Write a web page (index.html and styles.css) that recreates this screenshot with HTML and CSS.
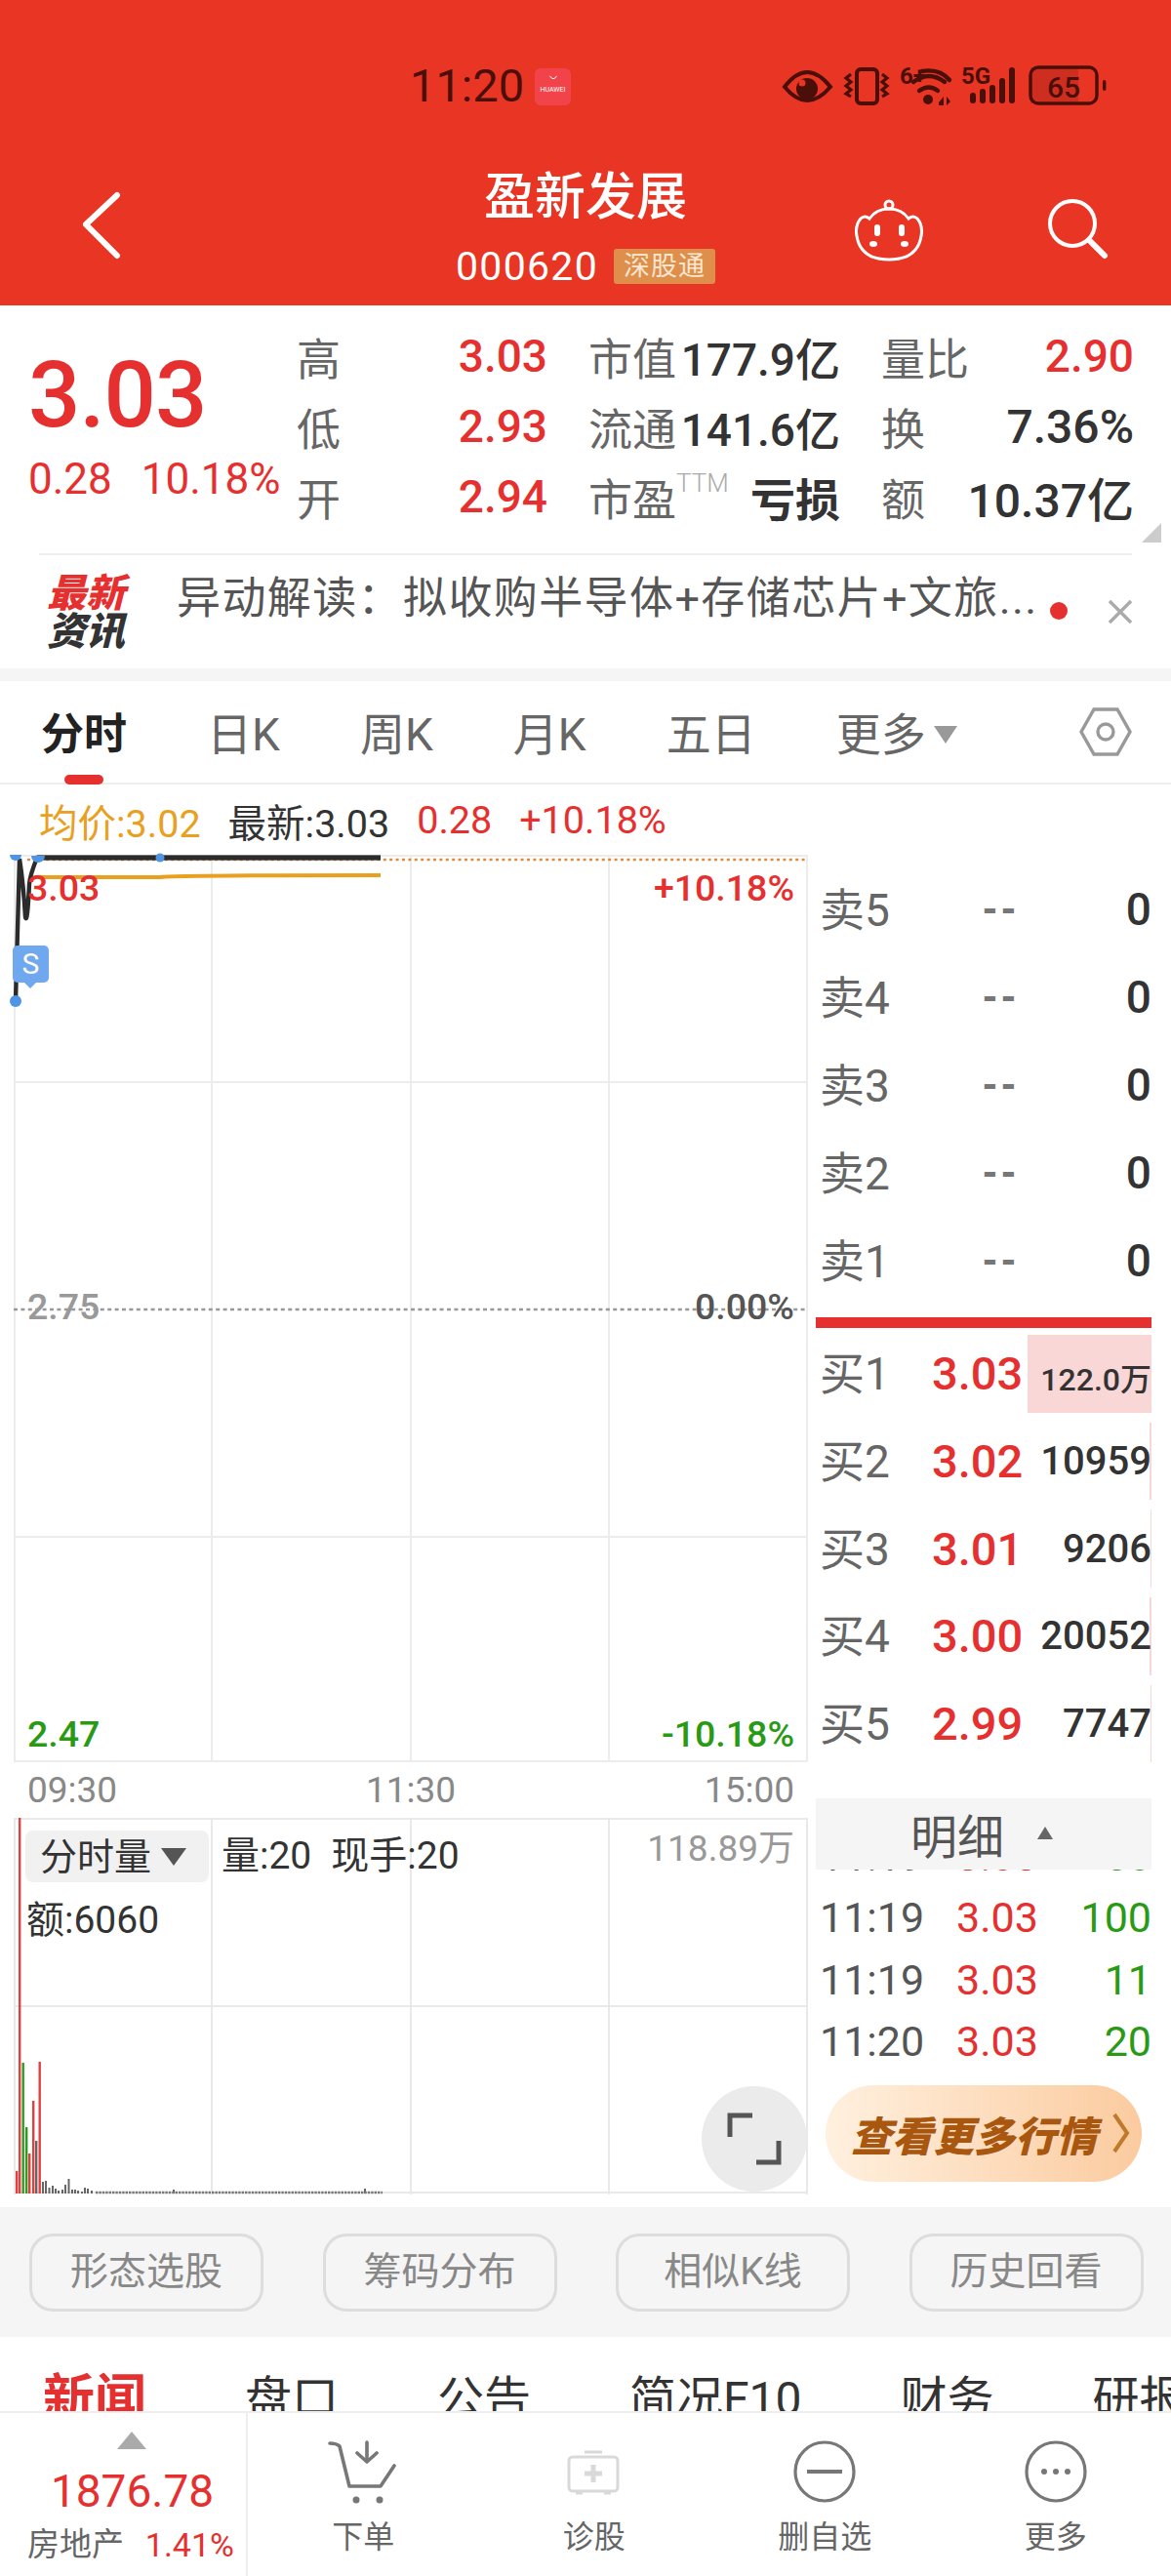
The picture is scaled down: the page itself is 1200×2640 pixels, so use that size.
FILE: index.html
```html
<!DOCTYPE html>
<html lang="zh-CN">
<head>
<meta charset="utf-8">
<title>盈新发展</title>
<link rel="stylesheet" href="styles.css">
</head>
<body>
<div class="page">
<header class="header">
  <div class="status">
    <span class="clock">11:20</span>
    <span class="hw"><svg class="hw-smile" viewBox="0 0 14 8"><path d="M2 1q5 8 10 0" fill="none" stroke="#fff" stroke-width="1.4"/></svg><span class="hw-text">HUAWEI</span></span>
    <svg class="status-icons" viewBox="0 0 350 65" width="350" height="65">
      <g fill="none" stroke="#4a0f08">
        <path d="M14 34Q37 4 61 34Q37 62 14 34Z" stroke-width="4"/>
        <rect x="88" y="16" width="21" height="35" rx="4" stroke-width="4"/>
        <path d="M82 21l-5 4 5 4-5 4 5 4-5 4 5 3M114 21l5 4-5 4 5 4-5 4 5 4-5 3" stroke-width="3.2"/>
        <path d="M155 18q18-3 28 9M146 29q16-12 32 0M152 38q10-7 19 0" stroke-width="4.4" stroke-linecap="round"/>
        <rect x="266" y="14" width="68" height="37" rx="8" stroke-width="3.4"/>
      </g>
      <path d="M266 14h49v37h-49z" fill="#4a0f08" opacity=".16"/>
      <g fill="#4a0f08">
        <circle cx="37" cy="36" r="11"/>
        <circle cx="161" cy="47" r="5"/>
        <path d="M172 50l5-6v9h-5zM180 44l4 5-4 4z"/>
        <rect x="204" y="40" width="6" height="11" rx="3"/>
        <rect x="214" y="36" width="6" height="15" rx="3"/>
        <rect x="224" y="32" width="6" height="19" rx="3"/>
        <rect x="234" y="25" width="6" height="26" rx="3"/>
        <rect x="244" y="14" width="6" height="37" rx="3"/>
        <rect x="340" y="27" width="3.4" height="11" rx="1.7"/>
        <text x="132" y="31" class="st-small">6+</text>
        <text x="195" y="31" class="st-small">5G</text>
        <text x="300" y="45" class="st-batt">65</text>
      </g>
      <circle cx="32" cy="30" r="3.5" fill="#e83524"/>
    </svg>
  </div>
  <div class="nav">
    <svg class="nav-back" viewBox="0 0 50 80" width="50" height="80"><path d="M38 6 6 36l32 32" fill="none" stroke="#fff" stroke-width="6" stroke-linecap="round" stroke-linejoin="round"/></svg>
    <div class="nav-title">
      <div class="stock-name">盈新发展</div>
      <div class="stock-code"><span>000620</span><span class="tag">深股通</span></div>
    </div>
    <svg class="nav-bot" viewBox="0 0 70 66" width="70" height="66">
      <g fill="none" stroke="#fff" stroke-width="3"><circle cx="35" cy="6" r="4"/><path d="M35 10q-13 0-20 10q-5-4-9 0q-6 7-4 18q4 24 33 24q29 0 33-24q2-11-4-18q-4-4-9 0q-7-10-20-10z"/></g>
      <g fill="#fff"><rect x="20" y="26" width="6" height="12" rx="3"/><rect x="45" y="26" width="6" height="12" rx="3"/><ellipse cx="19" cy="46" rx="4" ry="3"/><ellipse cx="51" cy="46" rx="4" ry="3"/></g>
    </svg>
    <svg class="nav-search" viewBox="0 0 64 64" width="64" height="64"><g fill="none" stroke="#fff"><circle cx="26" cy="26" r="23" stroke-width="4"/><path d="M43 43l16 16" stroke-width="6" stroke-linecap="round"/></g></svg>
  </div>
</header>

<section class="quote">
  <div class="quote-main">
    <div class="big-price">3.03</div>
    <div class="big-change"><span>0.28</span><span>10.18%</span></div>
  </div>
  <div class="quote-grid">
    <div class="cell"><span class="lbl">高</span><span class="red">3.03</span></div>
    <div class="cell"><span class="lbl">市值</span><span class="dark">177.9亿</span></div>
    <div class="cell"><span class="lbl">量比</span><span class="red">2.90</span></div>
    <div class="cell"><span class="lbl">低</span><span class="red">2.93</span></div>
    <div class="cell"><span class="lbl">流通</span><span class="dark">141.6亿</span></div>
    <div class="cell"><span class="lbl">换</span><span class="dark wide">7.36%</span></div>
    <div class="cell"><span class="lbl">开</span><span class="red">2.94</span></div>
    <div class="cell"><span class="lbl">市盈<sup class="ttm">TTM</sup></span><span class="dark strong">亏损</span></div>
    <div class="cell"><span class="lbl">额</span><span class="dark wide">10.37亿</span></div>
  </div>
  <i class="corner"></i>
</section>

<section class="news">
  <div class="news-logo"><span class="logo-a">最新</span><span class="logo-b">资讯</span></div>
  <div class="news-text">异动解读：拟收购半导体+存储芯片+文旅...</div>
  <i class="news-dot"></i>
  <svg class="news-close" viewBox="0 0 28 28" width="28" height="28"><path d="M3 3l22 22M25 3 3 25" stroke="#aaa" stroke-width="3.4" fill="none"/></svg>
</section>

<nav class="tabs">
  <span class="tab active">分时</span>
  <span class="tab">日K</span>
  <span class="tab">周K</span>
  <span class="tab">月K</span>
  <span class="tab">五日</span>
  <span class="tab">更多<i class="tab-caret"></i></span>
  <svg class="tab-hex" viewBox="0 0 56 56" width="56" height="56"><g fill="none" stroke="#999" stroke-width="3.4"><path d="M16 5h24l13 23-13 23H16L3 28z"/><circle cx="28" cy="28" r="8"/></g></svg>
</nav>

<main class="trade">
  <div class="charts">
    <div class="legend"><span class="orange">均价:3.02</span><span class="dark">最新:3.03</span><span class="red">0.28</span><span class="red">+10.18%</span></div>
    <div class="chart-main">
      <svg class="chart-svg" viewBox="0 0 814 930" width="814" height="930">
        <g stroke="#ececec" stroke-width="2" fill="none">
          <path d="M1 0V930M203 0V930M407 0V930M610 0V930M813 0V930M0 1H814M0 233H814M0 699H814M0 929H814"/>
        </g>
        <path d="M0 466H814" stroke="#999" stroke-width="2.4" stroke-dasharray="4 3.4"/>
        <path d="M14 5H814" stroke="#e08a3c" stroke-width="2.6" stroke-dasharray="3 3.4"/>
        <path d="M16 26Q20 22 30 23L150 23Q160 21 376 21" fill="none" stroke="#e8a01e" stroke-width="4"/>
        <path d="M2 150 6 4Q10 30 12 64Q14 72 16 30Q17 20 24 3H376" fill="none" stroke="#2b2b2b" stroke-width="4.4"/>
        <path d="M24 3H376" stroke="#2b2b2b" stroke-width="5"/>
        <g fill="#4f95e6"><path d="M-4 0h12a6 6 0 0 1-12 0z"/><circle cx="2" cy="150" r="6"/><path d="M18 1h14a7 7 0 0 1-14 0z"/><circle cx="150" cy="3" r="4.5"/></g>
      </svg>
      <span class="cl cl-tl red">3.03</span>
      <span class="cl cl-tr red">+10.18%</span>
      <span class="cl cl-ml grey">2.75</span>
      <span class="cl cl-mr mid">0.00%</span>
      <span class="cl cl-bl green">2.47</span>
      <span class="cl cl-br green">-10.18%</span>
      <span class="s-tag">S</span>
    </div>
    <div class="axis"><span>09:30</span><span>11:30</span><span>15:00</span></div>
    <div class="chart-vol">
      <svg class="chart-svg" viewBox="0 0 814 386" width="814" height="386">
        <path d="M1 0V386M203 0V386M407 0V386M610 0V386M813 0V386M0 1H814M0 193H814M0 384H814" stroke="#e9e9e9" stroke-width="2" fill="none"/>
        <g fill="#e1403f">
          <rect x="2" y="362" width="2.4" height="23"/><rect x="5" y="0" width="2.4" height="385"/>
          <rect x="15" y="344" width="2.4" height="41"/><rect x="19" y="290" width="2.4" height="95"/><rect x="25.5" y="250" width="2.4" height="135"/>
        </g>
        <g fill="#2f9a20"><rect x="8.500" y="251" width="2.400" height="134"/><rect x="12" y="317" width="2.400" height="68"/></g>
        <g fill="#666"><rect x="22" y="331" width="2.400" height="54"/>
          <rect x="29" y="373" width="2" height="12"/><rect x="32" y="372" width="2" height="13"/><rect x="35.500" y="379" width="2" height="6"/><rect x="39" y="377" width="2" height="8"/><rect x="42" y="380" width="2" height="5"/><rect x="45" y="382" width="2" height="3"/><rect x="49" y="381" width="2" height="4"/><rect x="52" y="376" width="2" height="9"/><rect x="55.500" y="370" width="2" height="15"/><rect x="59" y="381" width="2" height="4"/><rect x="62" y="381" width="2" height="4"/><rect x="65" y="382" width="2" height="3"/><rect x="69" y="383" width="2" height="2"/><rect x="72" y="379" width="2" height="6"/><rect x="75" y="380" width="2" height="5"/><rect x="79" y="382" width="2" height="3"/><rect x="163" y="381" width="2" height="4"/><rect x="359" y="380" width="2" height="5"/></g>
        <path d="M84 384H378" stroke="#777" stroke-width="2.400" stroke-dasharray="2.400 1"/>
      </svg>
      <span class="vol-chip">分时量<i class="vol-caret"></i></span>
      <span class="vol-info"><span>量:20</span><span>现手:20</span></span>
      <span class="vol-max">118.89万</span>
      <span class="vol-amt">额:6060</span>
      <span class="full-btn"><svg viewBox="0 0 64 64" width="64" height="64"><path d="M7 30V8H30M57 34V56H34" fill="none" stroke="#555" stroke-width="5"/></svg></span>
    </div>
  </div>
  <aside class="book">
    <div class="book-row"><span class="book-l">卖5</span><span class="book-dash">--</span><span class="book-v">0</span></div>
    <div class="book-row"><span class="book-l">卖4</span><span class="book-dash">--</span><span class="book-v">0</span></div>
    <div class="book-row"><span class="book-l">卖3</span><span class="book-dash">--</span><span class="book-v">0</span></div>
    <div class="book-row"><span class="book-l">卖2</span><span class="book-dash">--</span><span class="book-v">0</span></div>
    <div class="book-row"><span class="book-l">卖1</span><span class="book-dash">--</span><span class="book-v">0</span></div>
    <div class="book-sep"></div>
    <div class="book-row buy first"><i class="depth" style="width:127px"></i><span class="book-l">买1</span><span class="book-p">3.03</span><span class="book-v small">122.0万</span></div>
    <div class="book-row buy"><i class="depth" style="width:2px"></i><span class="book-l">买2</span><span class="book-p">3.02</span><span class="book-v">10959</span></div>
    <div class="book-row buy"><i class="depth" style="width:1px"></i><span class="book-l">买3</span><span class="book-p">3.01</span><span class="book-v">9206</span></div>
    <div class="book-row buy"><i class="depth" style="width:2px"></i><span class="book-l">买4</span><span class="book-p">3.00</span><span class="book-v">20052</span></div>
    <div class="book-row buy"><i class="depth" style="width:1px"></i><span class="book-l">买5</span><span class="book-p">2.99</span><span class="book-v">7747</span></div>
    <div class="detail-head"><span>明细</span><i class="detail-caret"></i></div>
    <div class="detail-list">
      <div class="detail-row clipped"><span>11:19</span><span class="red">3.03</span><span class="green">50</span></div>
      <div class="detail-row"><span>11:19</span><span class="red">3.03</span><span class="green">100</span></div>
      <div class="detail-row"><span>11:19</span><span class="red">3.03</span><span class="green">11</span></div>
      <div class="detail-row"><span>11:20</span><span class="red">3.03</span><span class="green">20</span></div>
    </div>
    <div class="more-btn"><span>查看更多行情</span><svg viewBox="0 0 20 44" width="20" height="44"><path d="M3 3l13 19L3 41" fill="none" stroke="#c07a2c" stroke-width="4"/></svg></div>
  </aside>
</main>

<section class="chips">
  <span class="chip">形态选股</span>
  <span class="chip">筹码分布</span>
  <span class="chip">相似K线</span>
  <span class="chip">历史回看</span>
</section>

<section class="subtabs">
  <span class="subtab active">新闻</span>
  <span class="subtab">盘口</span>
  <span class="subtab">公告</span>
  <span class="subtab">简况F10</span>
  <span class="subtab">财务</span>
  <span class="subtab">研报</span>
</section>

<footer class="bottom">
  <div class="sector">
    <i class="sector-up"></i>
    <div class="sector-val">1876.78</div>
    <div class="sector-line"><span>房地产</span><span class="red">1.41%</span></div>
  </div>
  <div class="action">
    <svg viewBox="0 0 80 80" width="80" height="80"><g fill="none" stroke="#777" stroke-width="3.600" stroke-linecap="round" stroke-linejoin="round"><path d="M6 9q7 0 10 3l10 41h32l14-21M44 8v20M34 19l10 9 10-9"/></g><circle cx="33" cy="67" r="3.500" fill="#777"/><circle cx="57" cy="67" r="3.500" fill="#777"/></svg>
    <span>下单</span>
  </div>
  <div class="action">
    <svg viewBox="0 0 80 80" width="80" height="80"><g fill="none" stroke="#d9d9d9"><rect x="14" y="23" width="50" height="35" rx="4" stroke-width="3"/><path d="M30 18h18" stroke-width="3"/><path d="M39 31v18M30 40h18" stroke-width="5"/><path d="M21 60h7M50 60h7" stroke-width="3"/></g></svg>
    <span>诊股</span>
  </div>
  <div class="action">
    <svg viewBox="0 0 80 80" width="80" height="80"><g fill="none" stroke="#777"><circle cx="40" cy="38" r="30" stroke-width="3.200"/><path d="M22 38h36" stroke-width="4"/></g></svg>
    <span>删自选</span>
  </div>
  <div class="action">
    <svg viewBox="0 0 80 80" width="80" height="80"><circle cx="40" cy="38" r="30" fill="none" stroke="#777" stroke-width="3.200"/><g fill="#777"><circle cx="28" cy="38" r="3"/><circle cx="40" cy="38" r="3"/><circle cx="52" cy="38" r="3"/></g></svg>
    <span>更多</span>
  </div>
</footer>
</div>
</body>
</html>
```
FILE: styles.css
```css
* { box-sizing: border-box; }
html, body { margin: 0; padding: 0; }
body { font-family: Roboto, "Noto Sans CJK SC", sans-serif; background: #fff; color: #333; }
i { display: block; font-style: normal; }
.page { width: 1200px; height: 2640px; overflow: hidden; }
.red { color: #e5302f; }
.green { color: #2a9a16; }
.dark { color: #333; }
.orange { color: #e8a01e; }
.grey { color: #999; }
.mid { color: #555; }

/* header */
.header { height: 313px; background: #e83524; display: flex; flex-direction: column; }
.status { height: 65px; margin-top: 55px; padding-left: 420px; padding-right: 60px; display: flex; align-items: center; }
.clock { font-size: 47px; line-height: 65px; color: #4a0f08; width: 128px; }
.hw { width: 37px; height: 38px; margin-top: 3px; border-radius: 6px; background: #f2434a; display: flex; flex-direction: column; align-items: center; overflow: hidden; }
.hw-smile { width: 10px; height: 6px; margin-top: 7px; }
.hw-text { font-size: 7px; line-height: 9px; margin-top: 5px; color: #fff; white-space: nowrap; }
.status-icons { margin-left: auto; }
.st-small { font-size: 24px; font-weight: 700; font-family: Roboto, sans-serif; }
.st-batt { font-size: 30px; font-weight: 500; text-anchor: middle; font-family: Roboto, sans-serif; }

.nav { position: relative; flex: 1; display: flex; align-items: flex-start; }
.nav-back { margin: 74px 0 0 82px; }
.nav-title { position: absolute; left: 0; right: 0; top: 53px; text-align: center; color: #fff; }
.stock-name { font-size: 52px; line-height: 60px; font-weight: 500; }
.stock-code { display: flex; justify-content: center; align-items: center; margin-top: 20px; font-size: 41px; line-height: 40px; font-weight: 400; letter-spacing: 1.3px; }
.tag { margin-left: 16px; width: 104px; height: 36px; border-radius: 3px; background: #dd8f4b; color: #fbe6d0; font-size: 27px; font-weight: 400; line-height: 36px; letter-spacing: 1px; }
.nav-bot { margin: 84px 0 0 744px; }
.nav-search { margin: 83px 0 0 127px; }

/* quote */
.quote { position: relative; height: 254px; display: flex; padding: 16px 37px 0 29px; }
.quote-main { width: 275px; flex: none; padding-top: 26px; }
.big-price { font-size: 94px; line-height: 100px; font-weight: 500; color: #e5302f; letter-spacing: -1px; }
.big-change { display: flex; gap: 30px; margin-top: 11px; font-size: 44px; line-height: 50px; color: #e5302f; white-space: nowrap; }
.quote-grid { flex: 1; display: grid; grid-template-columns: 257px 258px 259px; column-gap: 42px; grid-auto-rows: 72px; }
.cell { display: flex; justify-content: space-between; align-items: center; font-size: 46px; height: 72px; font-weight: 500; }
.lbl { color: #666; font-size: 45px; font-weight: 400; display: flex; }
.ttm { font-size: 26px; line-height: 36px; color: #aaa; font-weight: 300; vertical-align: top; margin: 0; }
.strong { font-weight: 700; }
.wide { font-size: 48px; }
.corner { position: absolute; right: 10px; bottom: 11px; width: 20px; height: 20px; background: #ccc; clip-path: polygon(100% 0, 100% 100%, 0 100%); }

/* news */
.news { height: 118px; display: flex; align-items: center; position: relative; }
.news::before { content: ""; position: absolute; left: 40px; right: 40px; top: 0; height: 2px; background: #eee; }
.news-logo { width: 131px; margin-left: 48px; margin-right: 2px; display: flex; flex-direction: column; font-weight: 900; font-size: 40px; line-height: 39px; margin-top: 4px; }
.logo-a { color: #e5302f; font-style: italic; }
.logo-b { color: #333; font-style: italic; }
.news-text { font-size: 45px; line-height: 60px; color: #555; width: 880px; white-space: nowrap; margin-top: -24px; letter-spacing: 1.4px; }
.news-dot { width: 18px; height: 18px; margin: 0 0 0 15px; border-radius: 50%; background: #e5302f; }
.news-close { margin: 2px 0 0 40px; }

/* tabs */
.tabs { height: 119px; border-top: 13px solid #f5f5f5; border-bottom: 2px solid #eee; display: flex; align-items: center; padding: 6px 0 0 42px; gap: 82px; position: relative; font-size: 46px; color: #666; }
.tab { position: relative; display: flex; align-items: center; line-height: 60px; }
.tab.active { font-weight: 700; color: #222; font-size: 44px; }
.tab.active::after { content: ""; position: absolute; left: 24px; top: 71px; width: 40px; height: 10px; border-radius: 5px; background: #e5302f; }
.tab-caret { width: 0; height: 0; margin-left: 8px; border-left: 12px solid transparent; border-right: 12px solid transparent; border-top: 18px solid #999; }
.tab-hex { position: absolute; left: 1105px; top: 24px; }

/* trade */
.trade { display: flex; height: 1458px; }
.charts { width: 836px; flex: none; }
.legend { height: 72px; padding-left: 40px; display: flex; align-items: center; gap: 28px; font-size: 39.500px; }
.chart-main { position: relative; margin-left: 14px; width: 814px; height: 930px; }
.chart-svg { display: block; overflow: visible; }
.cl { position: absolute; font-size: 37.500px; line-height: 44px; font-weight: 500; }
.cl-tl { left: 14px; top: 12px; }
.cl-tr { right: 14px; top: 12px; }
.cl-ml { left: 14px; top: 441px; }
.cl-mr { right: 14px; top: 441px; }
.cl-bl { left: 14px; top: 879px; }
.cl-br { right: 14px; top: 879px; }
.s-tag { position: absolute; left: -1px; top: 93px; width: 37px; height: 38px; border-radius: 5px; background: #6fa8ef; color: #fff; font-size: 30px; line-height: 38px; text-align: center; }
.s-tag::after { content: ""; position: absolute; left: 12px; top: 38px; border-left: 6px solid transparent; border-right: 6px solid transparent; border-top: 6px solid #6fa8ef; }
.axis { height: 57px; padding: 0 22px 0 28px; display: flex; justify-content: space-between; align-items: center; font-size: 37px; color: #888; }
.chart-vol { position: relative; margin-left: 14px; width: 814px; height: 386px; }
.vol-chip { position: absolute; left: 12px; top: 13px; width: 188px; height: 53px; border-radius: 8px; background: #f1f1f1; display: flex; align-items: center; padding: 0 0 6px 15px; font-size: 38px; color: #333; }
.vol-caret { width: 0; height: 0; margin: 6px 0 0 10px; border-left: 13px solid transparent; border-right: 13px solid transparent; border-top: 18px solid #555; }
.vol-info { position: absolute; left: 213px; top: 13px; display: flex; gap: 20px; font-size: 39px; line-height: 53px; color: #333; }
.vol-max { position: absolute; right: 14px; top: 10px; font-size: 37px; line-height: 44px; color: #999; }
.vol-amt { position: absolute; left: 13px; top: 83px; font-size: 39px; line-height: 44px; color: #333; }
.full-btn { position: absolute; left: 705px; top: 275px; width: 108px; height: 108px; border-radius: 50%; background: #ebebeb; display: flex; align-items: center; justify-content: center; }

/* order book */
.book { width: 344px; flex: none; padding-top: 83px; }
.book-row { position: relative; height: 90px; display: flex; align-items: center; padding: 0 0 0 4px; font-size: 46px; }
.book-l { width: 75px; color: #666; position: relative; margin-top: -7px; }
.book-dash { margin-left: 91px; color: #777; font-weight: 900; font-size: 38px; letter-spacing: 2px; }
.book-v { margin-left: auto; color: #333; position: relative; font-weight: 500; }
.book-sep { height: 11px; margin: 13px 0 2px; background: #e5302f; }
.book-row.buy { height: 89.700px; }
.book-p { margin-left: 40px; width: 90px; color: #e5302f; font-size: 47px; font-weight: 500; position: relative; }
.buy .book-v { font-size: 40px; }
.buy .book-v.small { font-size: 32px; margin-top: 6px; }
.depth { position: absolute; right: 0; top: 5px; bottom: 5px; background: #fad7d7; }
.detail-head { height: 73px; margin-top: 31.500px; background: #f5f5f5; display: flex; align-items: center; justify-content: center; padding-right: 54px; font-size: 48px; color: #555; position: relative; z-index: 1; }
.detail-caret { position: absolute; left: 227px; top: 29px; border-left: 8px solid transparent; border-right: 8px solid transparent; border-bottom: 13px solid #666; }
.detail-list { height: 207px; overflow: hidden; position: relative; }
.detail-row { height: 63.500px; display: flex; align-items: center; padding: 0 0 0 4px; font-size: 43px; color: #555; }
.detail-row span:nth-child(1) { width: 140px; }
.detail-row span:nth-child(2) { width: 100px; }
.detail-row span:nth-child(3) { flex: 1; text-align: right; }
.detail-row.clipped { margin-top: -46px; }
.more-btn { margin: 14px 10px 0 10px; height: 99px; border-radius: 50px; background: linear-gradient(90deg, #fff0df, #fbcb9f); display: flex; align-items: center; padding-left: 26px; gap: 15px; color: #a9560f; font-size: 42px; font-weight: 900; font-style: italic; }

/* chips */
.chips { height: 133px; background: #f5f5f5; padding: 27px 0 0 30px; display: flex; gap: 60.500px; }
.chip { width: 240px; height: 80px; border: 3px solid #ddd; border-radius: 24px; text-align: center; font-size: 39px; line-height: 72px; color: #888; }

/* sub tabs */
.subtabs { height: 76px; overflow: hidden; padding: 32px 0 0 44px; display: flex; gap: 101px; font-size: 48px; line-height: 64px; color: #333; white-space: nowrap; }
.subtab.active { font-size: 53px; font-weight: 700; color: #e5302f; }

/* bottom */
.bottom { height: 169px; border-top: 2px solid #eee; display: flex; background: #fff; }
.sector { width: 254px; flex: none; border-right: 2px solid #eee; position: relative; padding-top: 52px; }
.sector-up { position: absolute; left: 120px; top: 19px; border-left: 15px solid transparent; border-right: 15px solid transparent; border-bottom: 18px solid #aaa; }
.sector-val { text-align: center; padding-left: 19px; font-size: 46px; line-height: 56px; color: #e5302f; }
.sector-line { display: flex; justify-content: space-between; padding: 0 12px 0 28px; margin-top: 5px; font-size: 33px; line-height: 44px; color: #666; }
.sector-line .red { font-size: 34px; }
.action { flex: 1; display: flex; flex-direction: column; align-items: center; padding-top: 22px; font-size: 32px; line-height: 44px; color: #666; }
.action svg { display: block; }
.action span { margin-top: 3px; }
```
